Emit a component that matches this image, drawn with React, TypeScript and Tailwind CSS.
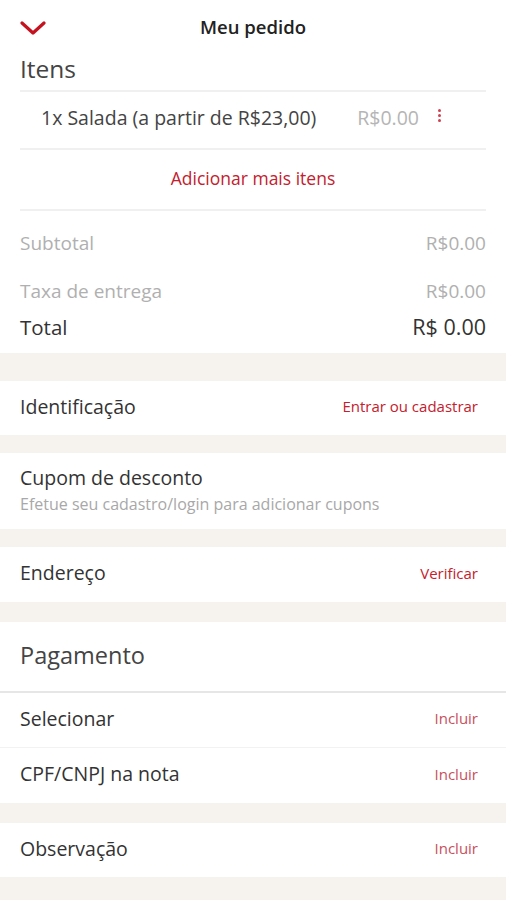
import React from 'react';

const RED = 'text-[#c4202d]';

function Gap({ h }: { h: string }) {
    return <div className={`${h} bg-[#f6f2ee]`} />;
}

function ActionRow({ label, action, h, soft }: { label: string; action: string; h: string; soft?: boolean }) {
    return (
        <div className={`flex items-center justify-between pb-[3px] pl-5 pr-[28px] ${h}`}>
            <span className="text-[19.5px] text-[#333]">{label}</span>
            <span className={`text-[15px] ${soft ? 'text-[#c8505c]' : RED}`}>{action}</span>
        </div>
    );
}

export default function App() {
    return (
        <div className="w-[506px] h-[900px] overflow-hidden bg-white font-['Open_Sans','Noto_Sans',sans-serif] leading-none text-[#333]">
            {/* header */}
            <div className="relative flex h-[48px] items-center justify-center pt-[6px]">
                <svg className="absolute left-[20px] top-[21px]" width="26" height="14" viewBox="0 0 26 14" fill="none">
                    <path d="M2 2 L13 12 L24 2" stroke="#c4121f" strokeWidth="3.2" strokeLinecap="round" strokeLinejoin="round" />
                </svg>
                <span className="text-[18.5px] font-semibold text-[#222]">Meu pedido</span>
            </div>

            {/* itens */}
            <div className="px-5">
                <div className="flex h-[42px] items-center text-[24.5px] text-[#444]">Itens</div>
                <div className="h-[2px] bg-[#f0f0f0]" />
                <div className="flex h-[56px] items-center pb-[5px] pl-[21px] pr-[45px]">
                    <span className="text-[19.5px] text-[#444]">1x Salada (a partir de R$23,00)</span>
                    <span className="ml-auto text-[19.5px] text-[#b5b5b5]">R$0.00</span>
                    <span className="ml-[19px] flex flex-col items-center gap-[2px] pb-[4px]">
                        <span className="h-[3px] w-[3px] rounded-full bg-[#d04050]" />
                        <span className="h-[3px] w-[3px] rounded-full bg-[#d04050]" />
                        <span className="h-[3px] w-[3px] rounded-full bg-[#d04050]" />
                    </span>
                </div>
                <div className="h-[2px] bg-[#f0f0f0]" />
                <div className={`flex h-[59px] items-center justify-center pb-[2px] text-[17.5px] ${RED}`}>Adicionar mais itens</div>
                <div className="h-[2px] bg-[#f0f0f0]" />

                <div className="pt-[8px]">
                    <div className="flex h-[48px] items-center justify-between text-[19px] text-[#b0b0b0]">
                        <span>Subtotal</span>
                        <span>R$0.00</span>
                    </div>
                    <div className="flex h-[48px] items-center justify-between text-[19px] text-[#b0b0b0]">
                        <span>Taxa de entrega</span>
                        <span>R$0.00</span>
                    </div>
                    <div className="flex h-[24px] items-center justify-between text-[#333]">
                        <span className="text-[20.5px]">Total</span>
                        <span className="text-[21.5px]">R$ 0.00</span>
                    </div>
                </div>
                <div className="h-[14px]" />
            </div>

            <Gap h="h-[28px]" />
            <ActionRow label="Identificação" action="Entrar ou cadastrar" h="h-[54px]" />
            <Gap h="h-[18px]" />

            <div className="flex h-[76px] flex-col justify-center pb-[2px] pl-5">
                <span className="text-[19.5px] text-[#333]">Cupom de desconto</span>
                <span className="mt-[8px] text-[16px] text-[#a8a8a8]">Efetue seu cadastro/login para adicionar cupons</span>
            </div>
            <Gap h="h-[18px]" />

            <ActionRow label="Endereço" action="Verificar" h="h-[55px]" />
            <Gap h="h-[20px]" />

            <div className="flex h-[69px] items-center pb-[2px] pl-5 text-[23.5px] text-[#444]">Pagamento</div>
            <div className="h-[2px] bg-[#e6e6e6]" />
            <ActionRow label="Selecionar" action="Incluir" h="h-[54px]" soft />
            <div className="h-px bg-[#f2f2f2]" />
            <ActionRow label="CPF/CNPJ na nota" action="Incluir" h="h-[55px]" soft />
            <Gap h="h-[20px]" />
            <ActionRow label="Observação" action="Incluir" h="h-[54px]" soft />
            <Gap h="h-[23px]" />
        </div>
    );
}
